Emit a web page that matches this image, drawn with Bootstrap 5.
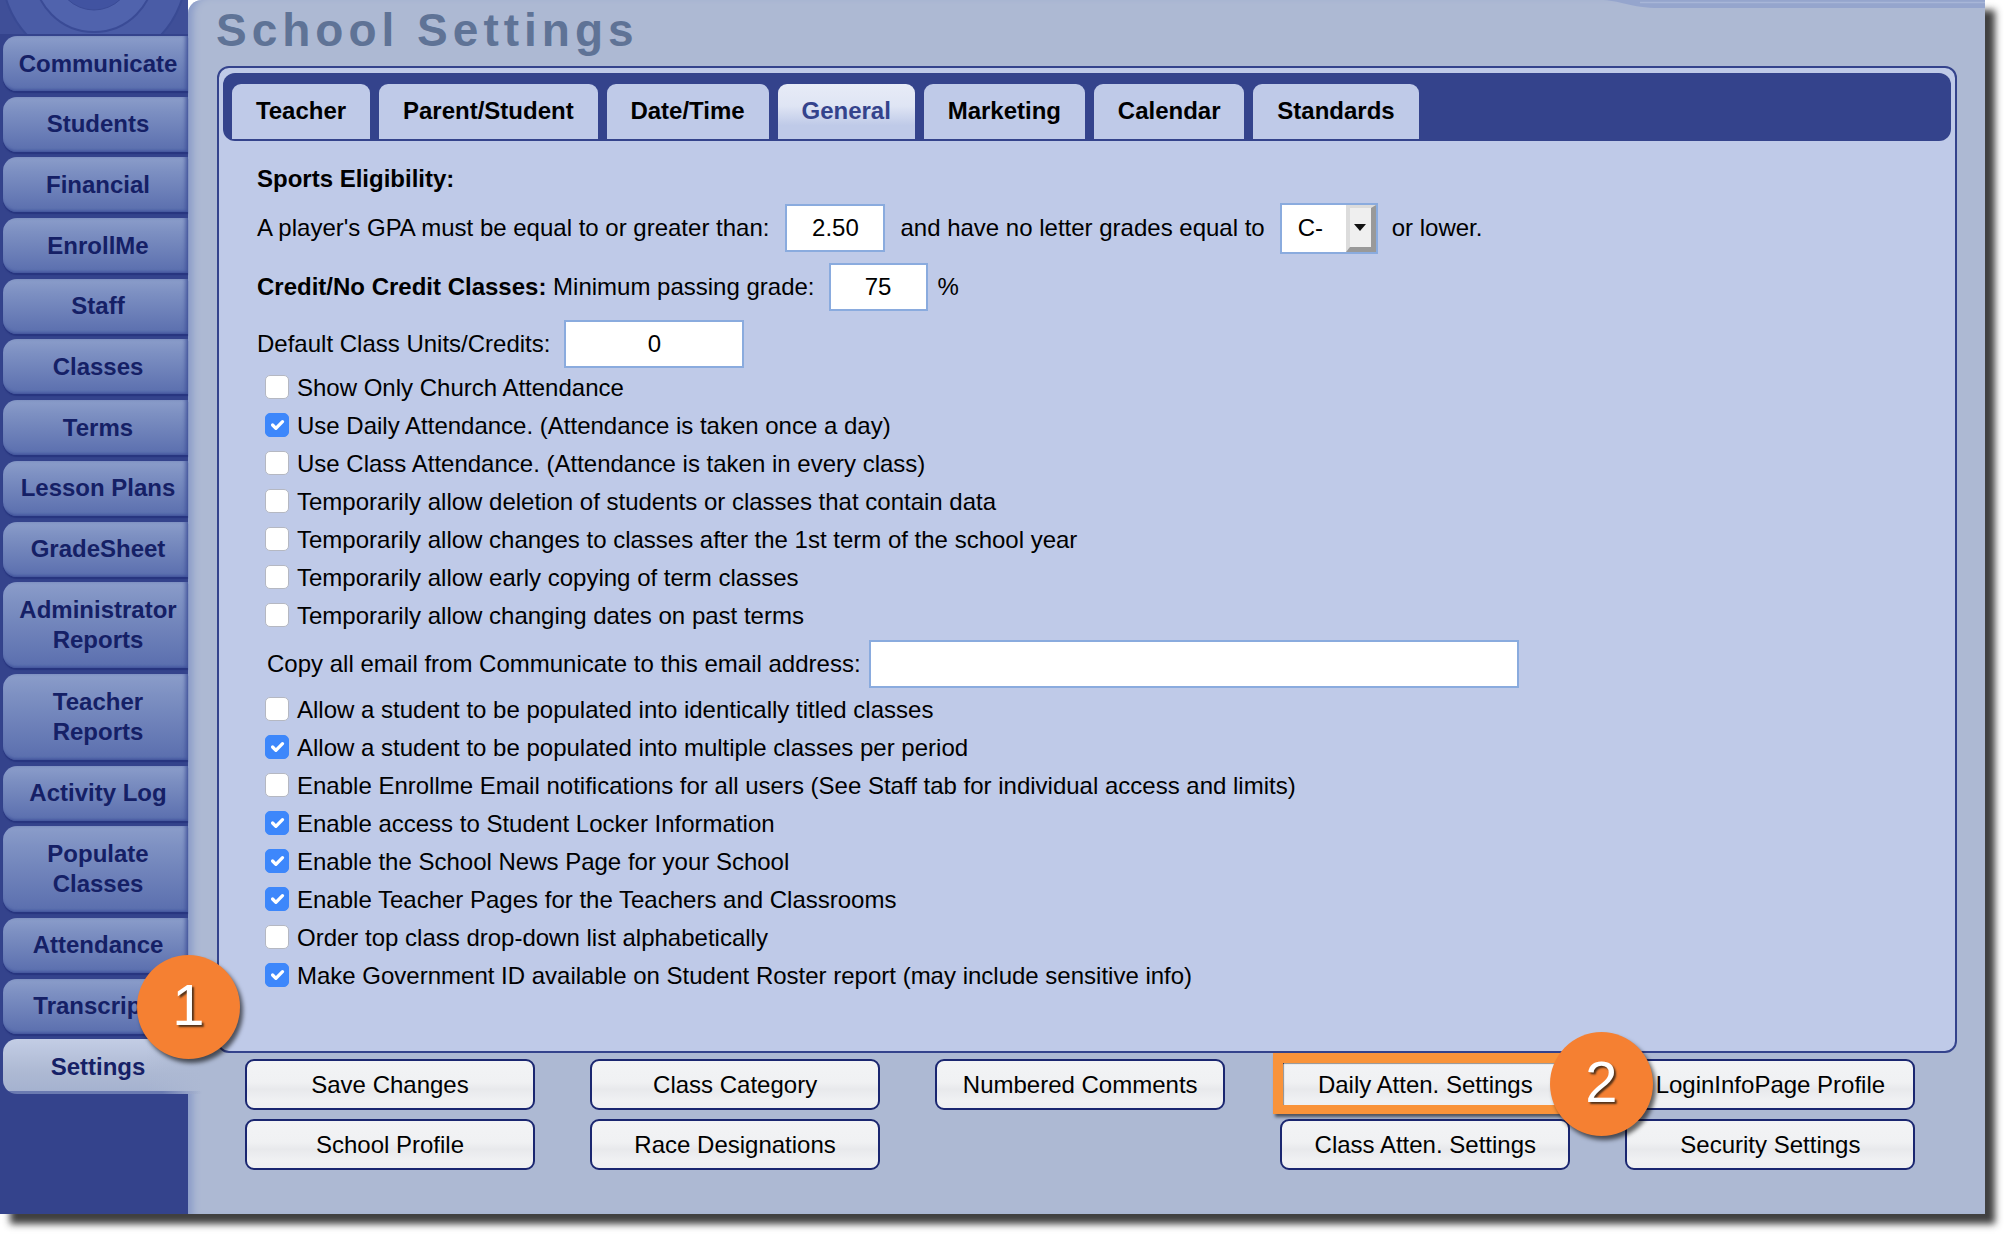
<!DOCTYPE html>
<html lang="en">
<head>
<meta charset="utf-8">
<title>School Settings</title>
<link href="https://cdn.jsdelivr.net/npm/bootstrap@5.3.0/dist/css/bootstrap.min.css" rel="stylesheet">
<style>
html,body{height:100%}
body{background:#fff;font-family:"Liberation Sans",Arial,sans-serif;font-size:24px;color:#000;overflow:hidden;line-height:1.2}
.appwin{width:1985px;height:1214px;position:relative;box-shadow:10px 10px 7px rgba(30,30,30,.85)}
.sidebar{width:188px;flex:none;background:#34438c;position:relative;z-index:1}
.logo{display:block;width:188px;height:34px;margin-bottom:2px}
.sidenav{gap:5.7px;padding-left:3px}
.sidenav .nav-link{height:55px;padding:0 0 0 5px;border-radius:14px 0 0 14px;background:linear-gradient(#8b9dca,#7d90c2 25%,#5a6eae);box-shadow:0 2px 1px #27357f,inset -4px 0 4px -2px #3f5199,inset 0 -3px 3px -2px #3f5199;color:#152066;font-weight:700;font-size:24px;line-height:30px;display:flex;align-items:center;justify-content:center;text-align:center}
.sidenav .nav-link.tall{height:86px}
.sidenav .nav-link.active{background:linear-gradient(to right,#6b7bb1 80%,transparent) bottom/100% 3px no-repeat,linear-gradient(to right,transparent 72%,#adb9d3 100%),linear-gradient(#c3cde5,#adb9d3 60%,#a4b1cf);box-shadow:none;margin-right:-14px;padding-right:14px;position:relative;z-index:2}
.mainarea{background:#adb9d3;border-radius:14px 0 0 0;box-shadow:inset 9px 0 7px -4px #8c9dc9;position:relative;min-width:0}
.pagetitle{height:66px;margin:0;padding:9px 0 0 28px;font-size:46px;line-height:42px;font-weight:700;letter-spacing:5px;color:#5f7396;overflow:hidden}
.toparc{position:absolute;top:0;right:0;width:385px;height:9px;display:block}
.panelbox{height:987px;margin:0 28px 0 29px;border:2px solid #34438c;border-radius:12px;background:#bfcae8;padding:5px 4px 0}
.tabbar{height:68px;background:#34438c;border-radius:12px;padding:11px 0 0 9px;gap:9px;flex-wrap:nowrap}
.tabbar .nav-link{height:55px;padding:0 23.9px;border-radius:9px 9px 0 0;background:#bfcae8;color:#000;font-weight:700;font-size:24px;line-height:54px}
.tabbar .nav-link.active{background:linear-gradient(#e7ebf7,#dfe5f4 40%,#bfcae8 75%);color:#34438c}
.formbody{padding-left:33px}
.line{display:flex;align-items:center;white-space:nowrap}
.line-head{height:38px;margin-top:19px;padding-left:1px}
.line-a{height:48px;margin-top:6px;padding-left:1px}
.line-b{height:48px;margin-top:11px;padding-left:1px}
.line-c{height:48px;margin:9px 0 1px;padding-left:1px}
.line-d{height:48px;margin:5px 0 3px 11px}
.numfield{height:48px;border:2px solid #8aabde;border-radius:0;background:#fff;text-align:center;padding:0;font-size:24px;color:#000;box-shadow:none}
.w-gpa{width:100px;margin:0 15px 0 16px}
.w-pass{width:99px;margin:0 10px 0 14px}
.w-units{width:180px;margin-left:14px}
.w-mail{width:650px;margin-left:8px}
.selwrap{position:relative;width:98px;height:51px;margin:0 14px 0 15px}
.selfield{width:100%;height:100%;border:2px solid #8aabde;border-radius:0;background:#fff;font-size:24px;padding:0 0 0 16px;appearance:none;-webkit-appearance:none;color:#000}
.selarrow{position:absolute;top:2px;right:2px;bottom:2px;width:30px;background:#efefef;border-style:solid;border-width:3px 5px 5px 4px;border-color:#dcdcdc #999 #999 #dcdcdc;display:flex;align-items:center;justify-content:center}
.selarrow::after{content:"";border-left:6px solid transparent;border-right:6px solid transparent;border-top:7px solid #111}
.checkline{height:38px;display:flex;align-items:center;margin:0;padding:0 0 0 9px;min-height:0;white-space:nowrap}
.checkline .form-check-input{width:24px;height:24px;margin:-2px 8px 0 0;float:none;border:1px solid #b5b8c2;border-radius:5px;background-color:#fff;flex:none}
.checkline .form-check-input:checked{background-color:#3d87fb;border-color:#3d87fb}
.checkline .form-check-label{line-height:38px}
.actionsgrid{display:grid;grid-template-columns:repeat(5,290px);column-gap:55.1px;row-gap:9px;margin:6px 0 0 57px}
.actbtn{height:51px;padding:0;border:2px solid #1a2670;border-radius:9px;background:linear-gradient(#f2f3f5 0,#f0f1f3 45%,#e8e9ec 60%,#f0f1f3 85%,#eeeff1 100%);color:#000;font-size:24px;line-height:1}
.actbtn:hover{background:#f0f1f3;color:#000;border-color:#1a2670}
.callout{position:absolute;width:103px;height:104px;border-radius:50%;background:#f58032;color:#fff;font-size:58px;line-height:100px;text-align:center;box-shadow:3px 4px 4px rgba(0,0,0,.6);text-shadow:2px 2px 2px rgba(40,30,20,.8);z-index:5}
.callout-one{left:137px;top:955px}
.callout-two{left:1550px;top:1032px}
.hilite{position:absolute;left:1273px;top:1053px;width:310px;height:61px;border:solid #f9933a;border-width:10px 10px 9px 10px;box-shadow:2px 3px 3px rgba(0,0,0,.55),inset 1px 1px 1px rgba(0,0,0,.4);z-index:4}
</style>
</head>
<body>
<div class="appwin d-flex">
  <aside class="sidebar">
    <svg class="logo" viewBox="0 0 188 34" aria-hidden="true">
      <rect width="188" height="34" fill="#3f4f98"/>
      <circle cx="94" cy="-28" r="92" fill="#4a5ca6" stroke="#394a94" stroke-width="2"/>
      <circle cx="94" cy="-28" r="60" fill="#5063ad" stroke="#3a4b96" stroke-width="2"/>
      <circle cx="94" cy="-28" r="38" fill="#4153a1" stroke="#3a4b96" stroke-width="1"/>
    </svg>
    <nav class="nav flex-column sidenav">
      <a class="nav-link" href="#">Communicate</a>
      <a class="nav-link" href="#">Students</a>
      <a class="nav-link" href="#">Financial</a>
      <a class="nav-link" href="#">EnrollMe</a>
      <a class="nav-link" href="#">Staff</a>
      <a class="nav-link" href="#">Classes</a>
      <a class="nav-link" href="#">Terms</a>
      <a class="nav-link" href="#">Lesson Plans</a>
      <a class="nav-link" href="#">GradeSheet</a>
      <a class="nav-link tall" href="#">Administrator<br>Reports</a>
      <a class="nav-link tall" href="#">Teacher<br>Reports</a>
      <a class="nav-link" href="#">Activity Log</a>
      <a class="nav-link tall" href="#">Populate<br>Classes</a>
      <a class="nav-link" href="#">Attendance</a>
      <a class="nav-link" href="#">Transcripts</a>
      <a class="nav-link active" href="#">Settings</a>
    </nav>
  </aside>
  <main class="mainarea flex-grow-1">
    <svg class="toparc" viewBox="0 0 385 9" preserveAspectRatio="none" aria-hidden="true">
      <path d="M0 0C20 0 30 8 60 8H385V0Z" fill="#95a5cd"/>
      <path d="M40 2.5H385" stroke="#a8b6d8" stroke-width="1.5" fill="none"/>
    </svg>
    <h1 class="pagetitle">School Settings</h1>
    <section class="panelbox">
      <nav class="nav tabbar">
        <a class="nav-link" href="#">Teacher</a>
        <a class="nav-link" href="#">Parent/Student</a>
        <a class="nav-link" href="#">Date/Time</a>
        <a class="nav-link active" href="#">General</a>
        <a class="nav-link" href="#">Marketing</a>
        <a class="nav-link" href="#">Calendar</a>
        <a class="nav-link" href="#">Standards</a>
      </nav>
      <form class="formbody">
        <div class="line line-head fw-bold">Sports Eligibility:</div>
        <div class="line line-a">
          <span>A player's GPA must be equal to or greater than:</span>
          <input class="form-control numfield w-gpa" type="text" value="2.50">
          <span>and have no letter grades equal to</span>
          <div class="selwrap">
            <select class="selfield"><option>C-</option></select>
            <span class="selarrow"></span>
          </div>
          <span>or lower.</span>
        </div>
        <div class="line line-b">
          <span><b>Credit/No Credit Classes:</b> Minimum passing grade:</span>
          <input class="form-control numfield w-pass" type="text" value="75">
          <span>%</span>
        </div>
        <div class="line line-c">
          <span>Default Class Units/Credits:</span>
          <input class="form-control numfield w-units" type="text" value="0">
        </div>
        <div class="form-check checkline"><input class="form-check-input" type="checkbox" id="c1"><label class="form-check-label" for="c1">Show Only Church Attendance</label></div>
        <div class="form-check checkline"><input class="form-check-input" type="checkbox" id="c2" checked><label class="form-check-label" for="c2">Use Daily Attendance. (Attendance is taken once a day)</label></div>
        <div class="form-check checkline"><input class="form-check-input" type="checkbox" id="c3"><label class="form-check-label" for="c3">Use Class Attendance. (Attendance is taken in every class)</label></div>
        <div class="form-check checkline"><input class="form-check-input" type="checkbox" id="c4"><label class="form-check-label" for="c4">Temporarily allow deletion of students or classes that contain data</label></div>
        <div class="form-check checkline"><input class="form-check-input" type="checkbox" id="c5"><label class="form-check-label" for="c5">Temporarily allow changes to classes after the 1st term of the school year</label></div>
        <div class="form-check checkline"><input class="form-check-input" type="checkbox" id="c6"><label class="form-check-label" for="c6">Temporarily allow early copying of term classes</label></div>
        <div class="form-check checkline"><input class="form-check-input" type="checkbox" id="c7"><label class="form-check-label" for="c7">Temporarily allow changing dates on past terms</label></div>
        <div class="line line-d">
          <span>Copy all email from Communicate to this email address:</span>
          <input class="form-control numfield w-mail" type="text">
        </div>
        <div class="form-check checkline"><input class="form-check-input" type="checkbox" id="c8"><label class="form-check-label" for="c8">Allow a student to be populated into identically titled classes</label></div>
        <div class="form-check checkline"><input class="form-check-input" type="checkbox" id="c9" checked><label class="form-check-label" for="c9">Allow a student to be populated into multiple classes per period</label></div>
        <div class="form-check checkline"><input class="form-check-input" type="checkbox" id="c10"><label class="form-check-label" for="c10">Enable Enrollme Email notifications for all users (See Staff tab for individual access and limits)</label></div>
        <div class="form-check checkline"><input class="form-check-input" type="checkbox" id="c11" checked><label class="form-check-label" for="c11">Enable access to Student Locker Information</label></div>
        <div class="form-check checkline"><input class="form-check-input" type="checkbox" id="c12" checked><label class="form-check-label" for="c12">Enable the School News Page for your School</label></div>
        <div class="form-check checkline"><input class="form-check-input" type="checkbox" id="c13" checked><label class="form-check-label" for="c13">Enable Teacher Pages for the Teachers and Classrooms</label></div>
        <div class="form-check checkline"><input class="form-check-input" type="checkbox" id="c14"><label class="form-check-label" for="c14">Order top class drop-down list alphabetically</label></div>
        <div class="form-check checkline"><input class="form-check-input" type="checkbox" id="c15" checked><label class="form-check-label" for="c15">Make Government ID available on Student Roster report (may include sensitive info)</label></div>
      </form>
    </section>
    <div class="actionsgrid">
      <button class="btn actbtn">Save Changes</button>
      <button class="btn actbtn">Class Category</button>
      <button class="btn actbtn">Numbered Comments</button>
      <button class="btn actbtn">Daily Atten. Settings</button>
      <button class="btn actbtn">LoginInfoPage Profile</button>
      <button class="btn actbtn">School Profile</button>
      <button class="btn actbtn">Race Designations</button>
      <span></span>
      <button class="btn actbtn">Class Atten. Settings</button>
      <button class="btn actbtn">Security Settings</button>
    </div>
  </main>
  <div class="hilite"></div>
  <div class="callout callout-one">1</div>
  <div class="callout callout-two">2</div>
</div>
<script src="https://cdn.jsdelivr.net/npm/bootstrap@5.3.0/dist/js/bootstrap.bundle.min.js"></script>
</body>
</html>
